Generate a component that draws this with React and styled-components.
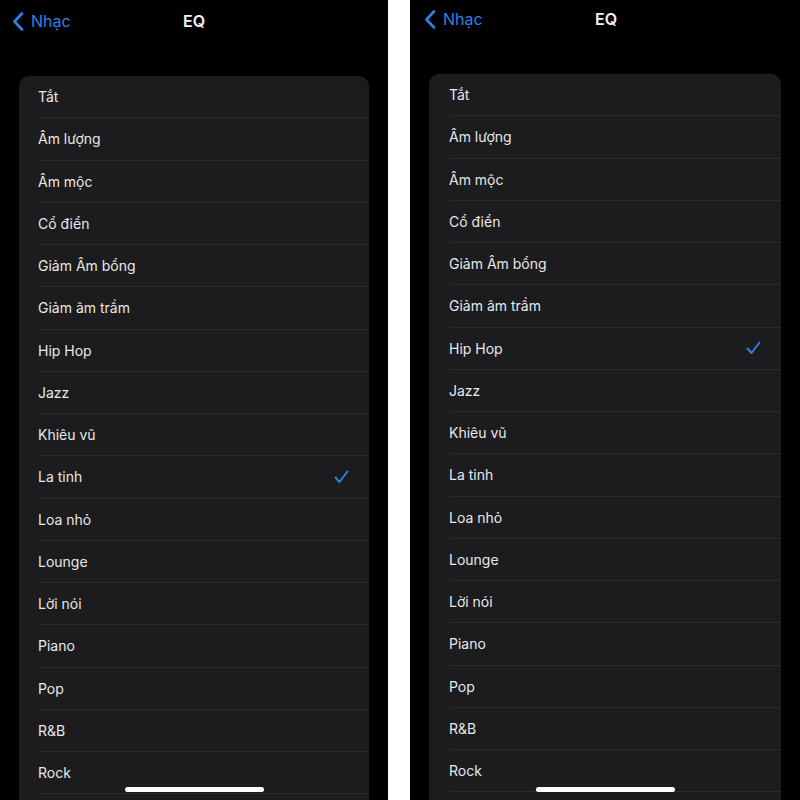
import React from "react";
import styled, { createGlobalStyle } from "styled-components";

const GlobalStyle = createGlobalStyle`
  html, body {
    margin: 0;
    padding: 0;
    background: #ffffff;
  }
  body {
    font-family: Inter, "Noto Sans", "Liberation Sans", sans-serif;
    -webkit-font-smoothing: antialiased;
  }
`;

const PRESETS = [
  "Tắt",
  "Âm lượng",
  "Âm mộc",
  "Cổ điển",
  "Giảm Âm bổng",
  "Giảm âm trầm",
  "Hip Hop",
  "Jazz",
  "Khiêu vũ",
  "La tinh",
  "Loa nhỏ",
  "Lounge",
  "Lời nói",
  "Piano",
  "Pop",
  "R&B",
  "Rock",
  "",
];

const Page = styled.div`
  display: flex;
  width: 800px;
  height: 800px;
  overflow: hidden;
  background: #ffffff;
`;

const Phone = styled.div`
  position: relative;
  width: ${(props) => props.width}px;
  margin-left: ${(props) => props.gap || 0}px;
  height: 800px;
  background: #000000;
  overflow: hidden;
  display: flex;
  flex-direction: column;
`;

const NavBar = styled.div`
  display: grid;
  grid-template-columns: 1fr auto 1fr;
  align-items: center;
  height: 24px;
  margin-top: ${(props) => props.top}px;
  padding: 0 10px 0 ${(props) => props.left}px;
`;

const BackButton = styled.div`
  display: flex;
  align-items: center;
  gap: 7px;
  color: #2f82e6;
  font-size: 16px;
`;

const Title = styled.div`
  color: #f2f2f2;
  font-size: 16px;
  font-weight: 600;
  margin-left: ${(props) => props.shift}px;
`;

const Card = styled.div`
  margin: ${(props) => props.top}px 19px 0 ${(props) => props.left}px;
  background: #1c1c1e;
  border-radius: 10px 10px 0 0;
`;

const Row = styled.div`
  display: flex;
  align-items: center;
  justify-content: space-between;
  height: 42.25px;
  margin-left: ${(props) => props.indent}px;
  padding-right: 20px;
  box-sizing: border-box;
  border-bottom: 1px solid #2b2b2d;
  color: #e8e8e8;
  font-size: 14px;
`;

const HomeBar = styled.div`
  position: absolute;
  bottom: 8px;
  left: ${(props) => props.left}px;
  width: 139px;
  height: 5px;
  border-radius: 3px;
  background: #ffffff;
`;

const Chevron = () => (
  <svg width="12" height="19" viewBox="0 0 12 19">
    <path
      d="M10 1.5 L2.5 9.5 L10 17.5"
      fill="none"
      stroke="#2f82e6"
      strokeWidth="2.6"
      strokeLinecap="round"
      strokeLinejoin="round"
    />
  </svg>
);

const Check = () => (
  <svg width="15" height="14" viewBox="0 0 15 14">
    <path
      d="M1.5 7.5 L5.5 12 L13.5 1.5"
      fill="none"
      stroke="#2f82e6"
      strokeWidth="1.9"
      strokeLinecap="round"
      strokeLinejoin="round"
    />
  </svg>
);

const Screen = ({ width, gap, navTop, navLeft, cardTop, indent, selected, homeLeft }) => (
  <Phone width={width} gap={gap}>
    <NavBar top={navTop} left={navLeft}>
      <BackButton>
        <Chevron />
        Nhạc
      </BackButton>
      <Title shift={-2}>EQ</Title>
      <div />
    </NavBar>
    <Card top={cardTop} left={19}>
      {PRESETS.map((name, i) => (
        <Row key={i} indent={indent}>
          <span>{name}</span>
          {name === selected && <Check />}
        </Row>
      ))}
    </Card>
    <HomeBar left={homeLeft} />
  </Phone>
);

export default function App() {
  return (
    <>
      <GlobalStyle />
      <Page>
        <Screen
          width={388}
          navTop={11}
          navLeft={12}
          cardTop={45}
          indent={19}
          selected="La tinh"
          homeLeft={125}
        />
        <Screen
          width={390}
          gap={22}
          navTop={9}
          navLeft={14}
          cardTop={45}
          indent={20}
          selected="Hip Hop"
          homeLeft={126}
        />
      </Page>
    </>
  );
}
